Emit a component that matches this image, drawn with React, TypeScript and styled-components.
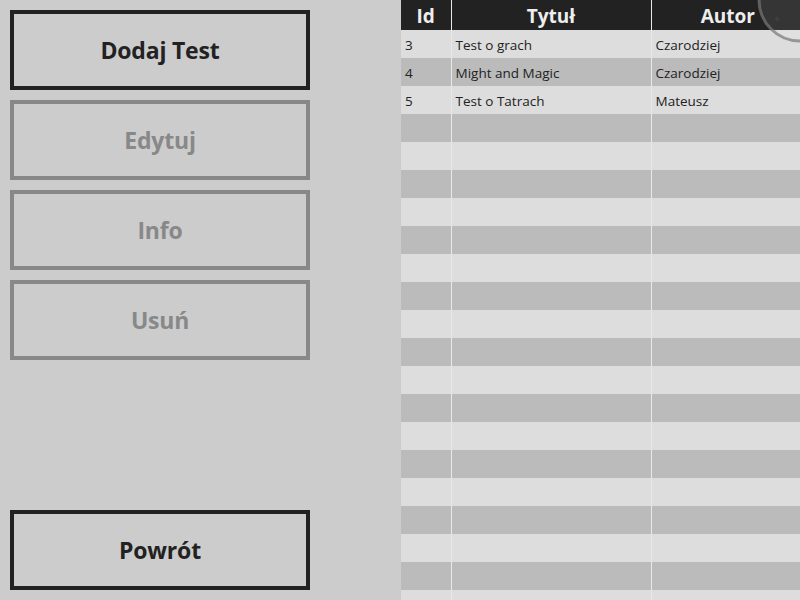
import React from "react";
import styled, { createGlobalStyle } from "styled-components";

const Global = createGlobalStyle`
  html, body { margin: 0; padding: 0; background: #cccccc; }
  body { font-family: "Open Sans", "Noto Sans", "DejaVu Sans", sans-serif; overflow: hidden; }
  * { box-sizing: border-box; }
`;

const Page = styled.div`
  display: flex;
  width: 800px;
  height: 600px;
  overflow: hidden;
  background: #cccccc;
`;

const Sidebar = styled.div`
  width: 401px;
  flex: 0 0 401px;
  display: flex;
  flex-direction: column;
  gap: 10px;
  padding: 10px;
`;

const ActionButton = styled.button<{ $enabled?: boolean }>`
  width: 300px;
  height: 80px;
  flex: 0 0 80px;
  background: #cccccc;
  border: 4px solid ${(p) => (p.$enabled ? "#222222" : "#888888")};
  color: ${(p) => (p.$enabled ? "#222222" : "#888888")};
  font-family: "Open Sans", "Noto Sans", sans-serif;
  font-weight: 700;
  font-size: 23px;
  letter-spacing: -0.2px;
  padding: 0;
  cursor: pointer;
`;

const BackButton = styled(ActionButton)`
  margin-top: auto;
`;

const TableArea = styled.div`
  flex: 1;
  overflow: hidden;
  position: relative;
`;

const Table = styled.table`
  border-collapse: collapse;
  table-layout: fixed;
  width: 403px;
  font-family: "Open Sans", "Noto Sans", sans-serif;
`;

const HeadCell = styled.th<{ $w: number }>`
  width: ${(p) => p.$w}px;
  height: 30px;
  padding: 3px 0 0;
  background: #222222;
  color: #eeeeee;
  font-size: 19px;
  font-weight: 700;
  text-align: center;
  border-right: 1px solid #e8e8e8;
  line-height: 27px;
  &:last-child { border-right: none; }
`;

const Row = styled.tr<{ $dark: boolean }>`
  background: ${(p) => (p.$dark ? "#bbbbbb" : "#dddddd")};
`;

const Cell = styled.td`
  height: 28px;
  padding: 1px 0 0 4px;
  font-size: 13.5px;
  color: #222222;
  border-right: 1px solid #e8e8e8;
  white-space: nowrap;
  overflow: hidden;
  &:last-child { border-right: none; }
`;

const Overlay = styled.svg`
  position: fixed;
  top: 0;
  right: 0;
  width: 44px;
  height: 46px;
  pointer-events: none;
`;

const data = [
  { id: "3", title: "Test o grach", author: "Czarodziej" },
  { id: "4", title: "Might and Magic", author: "Czarodziej" },
  { id: "5", title: "Test o Tatrach", author: "Mateusz" },
];

export default function App() {
  const rows = [...data];
  while (rows.length < 21) rows.push({ id: "", title: "", author: "" });
  return (
    <Page>
      <Global />
      <Sidebar>
        <ActionButton $enabled>Dodaj Test</ActionButton>
        <ActionButton>Edytuj</ActionButton>
        <ActionButton>Info</ActionButton>
        <ActionButton>Usuń</ActionButton>
        <BackButton $enabled>Powrót</BackButton>
      </Sidebar>
      <TableArea>
        <Table>
          <thead>
            <tr>
              <HeadCell $w={50}>Id</HeadCell>
              <HeadCell $w={200}>Tytuł</HeadCell>
              <HeadCell $w={153}>Autor</HeadCell>
            </tr>
          </thead>
          <tbody>
            {rows.map((r, i) => (
              <Row key={i} $dark={i % 2 === 1}>
                <Cell>{r.id}</Cell>
                <Cell>{r.title}</Cell>
                <Cell>{r.author}</Cell>
              </Row>
            ))}
          </tbody>
        </Table>
      </TableArea>
      <Overlay viewBox="758 0 44 46">
        <circle cx="802" cy="0" r="41" fill="rgba(255,255,255,0.09)" stroke="rgba(120,120,120,0.7)" strokeWidth="3" />
        <path d="M776 19h6M779 16v6" stroke="rgba(255,255,255,0.06)" strokeWidth="1" />
      </Overlay>
    </Page>
  );
}
